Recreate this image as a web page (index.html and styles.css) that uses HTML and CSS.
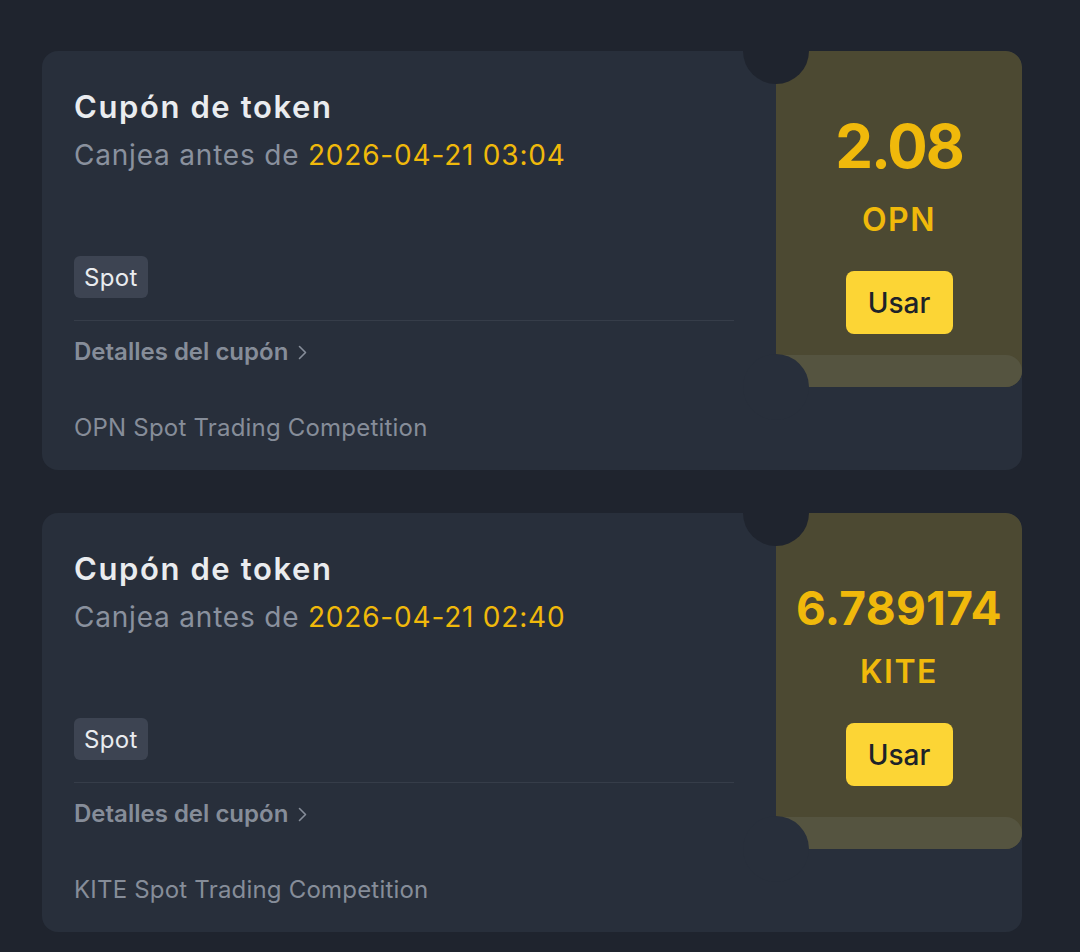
FILE: index.html
```html
<!DOCTYPE html>
<html lang="es">
<head>
<meta charset="utf-8">
<title>Cupones</title>
<link rel="stylesheet" href="styles.css">
</head>
<body>
<main class="list">
  <section class="card">
    <div class="info">
      <h2 class="title">Cupón de token</h2>
      <p class="expiry">Canjea antes de <span class="date">2026-04-21 03:04</span></p>
      <span class="tag">Spot</span>
      <div class="divider"></div>
      <a class="details">Detalles del cupón <svg class="chev" width="9" height="15" viewBox="0 0 9 15"><path d="M1.5 1.5l6 6-6 6" fill="none" stroke="currentColor" stroke-width="1.6" stroke-linecap="round" stroke-linejoin="round"/></svg></a>
      <p class="campaign">OPN Spot Trading Competition</p>
    </div>
    <div class="value">
      <div class="amount">2.08</div>
      <div class="token">OPN</div>
      <button class="use">Usar</button>
      <div class="band"></div>
    </div>
    <span class="notch notch-top"></span>
    <span class="notch notch-bottom"></span>
  </section>

  <section class="card">
    <div class="info">
      <h2 class="title">Cupón de token</h2>
      <p class="expiry">Canjea antes de <span class="date">2026-04-21 02:40</span></p>
      <span class="tag">Spot</span>
      <div class="divider"></div>
      <a class="details">Detalles del cupón <svg class="chev" width="9" height="15" viewBox="0 0 9 15"><path d="M1.5 1.5l6 6-6 6" fill="none" stroke="currentColor" stroke-width="1.6" stroke-linecap="round" stroke-linejoin="round"/></svg></a>
      <p class="campaign">KITE Spot Trading Competition</p>
    </div>
    <div class="value">
      <div class="amount amount-long">6.789174</div>
      <div class="token">KITE</div>
      <button class="use">Usar</button>
      <div class="band"></div>
    </div>
    <span class="notch notch-top"></span>
    <span class="notch notch-bottom"></span>
  </section>
</main>
</body>
</html>
```

FILE: styles.css
```css
* { box-sizing: border-box; }

html, body {
  margin: 0;
  background: #1f242e;
}

body {
  font-family: Inter, "Noto Sans", sans-serif;
  color: #eaecef;
}

.list {
  display: flex;
  flex-direction: column;
  gap: 43px;
  padding: 51px 58px 20px 42px;
}

.card {
  position: relative;
  display: flex;
  align-items: flex-start;
  background: #282f3b;
  border-radius: 16px;
  overflow: hidden;
}

.info {
  flex: 0 0 734px;
  display: flex;
  flex-direction: column;
  align-items: flex-start;
  padding: 38px 42px 26px 32px;
}

.title {
  margin: 0;
  font-size: 31px;
  line-height: 36px;
  font-weight: 600;
  letter-spacing: 1.6px;
  color: #eaecef;
}

.expiry {
  margin: 12px 0 0;
  font-size: 28px;
  line-height: 36px;
  letter-spacing: 0.8px;
  color: #8a919e;
}

.date { color: #f0b90b; }

.tag {
  margin-top: 83px;
  height: 42px;
  padding: 0 10px;
  display: flex;
  align-items: center;
  background: #3d4452;
  border-radius: 6px;
  font-size: 24px;
  letter-spacing: 0.3px;
  color: #eaecef;
}

.divider {
  align-self: stretch;
  margin-top: 22px;
  height: 1px;
  background: #363d49;
}

.details {
  margin-top: 15px;
  display: flex;
  align-items: center;
  gap: 10px;
  font-size: 24px;
  line-height: 32px;
  font-weight: 600;
  color: #868d99;
}

.chev { color: #868d99; }

.campaign {
  margin: 44px 0 0;
  font-size: 24px;
  line-height: 32px;
  letter-spacing: 0.2px;
  color: #868d99;
}

.value {
  position: relative;
  flex: 1;
  height: 336px;
  display: flex;
  flex-direction: column;
  align-items: center;
  padding-top: 60px;
  background: #4c4932;
  border-radius: 0 16px 16px 0;
}

.amount {
  font-size: 60px;
  line-height: 70px;
  font-weight: 700;
  letter-spacing: -2px;
  color: #f0b90b;
}

.amount-long {
  font-size: 46px;
  line-height: 50px;
  letter-spacing: 0.3px;
  margin-top: 10px;
}

.token {
  margin-top: 21px;
  font-size: 32px;
  line-height: 36px;
  font-weight: 600;
  letter-spacing: 1.5px;
  color: #f0b90b;
}

.use {
  margin-top: 33px;
  width: 107px;
  height: 63px;
  border: 0;
  border-radius: 8px;
  background: #fcd535;
  font-family: inherit;
  font-size: 28px;
  font-weight: 500;
  color: #1e2329;
}

.band {
  position: absolute;
  left: 0;
  right: 0;
  bottom: 0;
  height: 32px;
  background: #555440;
  border-radius: 0 16px 16px 0;
}

.notch {
  position: absolute;
  left: 701px;
  width: 66px;
  height: 66px;
  border-radius: 50%;
}

.notch-top {
  top: -33px;
  background: #1f242e;
}

.notch-bottom {
  top: 303px;
  background: #282f3b;
}
```
